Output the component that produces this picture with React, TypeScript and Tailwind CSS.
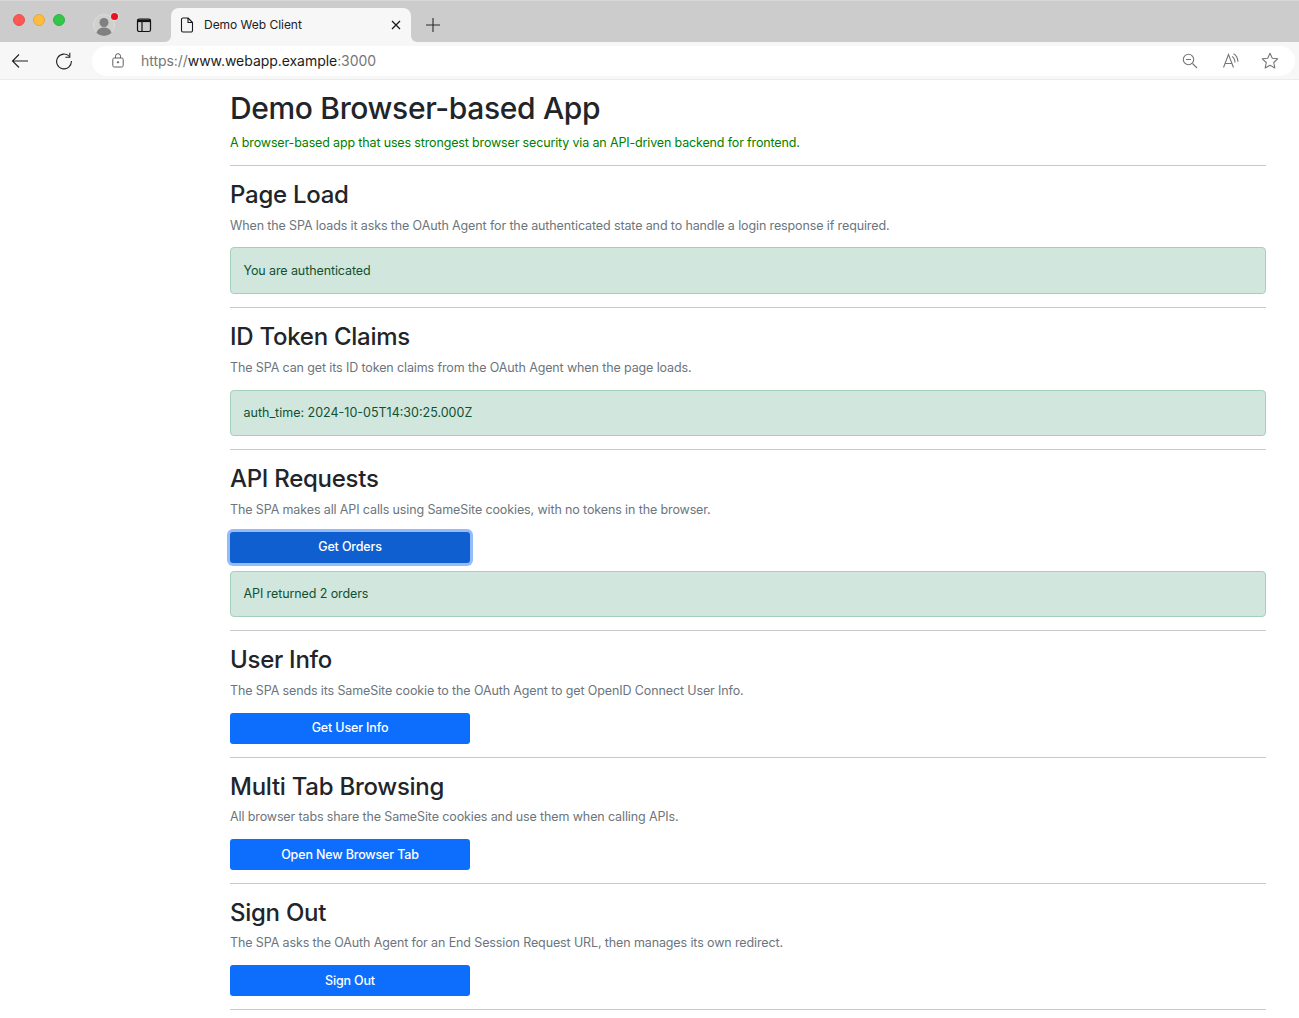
import { ReactNode } from "react";

function BrowserChrome() {
  return (
    <div className="h-[80px] w-full">
      {/* Tab strip */}
      <div className="relative flex h-[42px] items-start bg-[#cccccc] border-t border-[#d8d8d8]">
        <div className="ml-[13px] mt-[13px] flex gap-[8px]">
          <span className="h-[12px] w-[12px] rounded-full border border-[#e5534f] bg-[#fc5753]" />
          <span className="h-[12px] w-[12px] rounded-full border border-[#e5a93a] bg-[#fdbc40]" />
          <span className="h-[12px] w-[12px] rounded-full border border-[#2fb341] bg-[#33c748]" />
        </div>
        <div className="relative ml-[28px] mt-[13px] h-[22px] w-[22px]">
          <svg width="22" height="22" viewBox="0 0 22 22">
            <circle cx="11" cy="11" r="10.500" fill="#d0d0cd" stroke="#dcdcda" />
            <circle cx="11" cy="8.500" r="4.500" fill="#808080" />
            <path d="M3.500 19c1-4 4-5.500 7.500-5.500s6.500 1.500 7.500 5.500a11 11 0 0 1-15 0z" fill="#808080" />
          </svg>
          <span className="absolute right-[-3px] top-[-1px] h-[7px] w-[7px] rounded-full bg-[#e81123] ring-1 ring-[#dcdcda]" />
        </div>
        <svg className="ml-[21px] mt-[16px]" width="16" height="16" viewBox="0 0 16 16" fill="none" stroke="#111111" strokeWidth="1.200">
          <rect x="1.500" y="2" width="13" height="12.500" rx="1.800" />
          <path d="M1.500 3.800h13" strokeWidth="2.600" />
          <path d="M6 5v9" />
        </svg>
        <div className="relative ml-[19px] mt-[7px] flex h-[34px] w-[240px] items-center rounded-t-[8px] bg-[#f7f7f7] pb-[1px] pl-[9px] pr-[10px]">
          <svg className="absolute bottom-0 left-[-6px]" width="6" height="6" viewBox="0 0 6 6">
            <path d="M6 0v6H0a6 6 0 0 0 6-6z" fill="#f7f7f7" />
          </svg>
          <svg className="absolute bottom-0 right-[-6px]" width="6" height="6" viewBox="0 0 6 6">
            <path d="M0 0v6h6a6 6 0 0 1-6-6z" fill="#f7f7f7" />
          </svg>
          <svg width="14" height="16" viewBox="0 0 14 16" fill="none" stroke="#1a1a1a" strokeWidth="1.100" strokeLinejoin="round">
            <path d="M1.500 2.500a1.500 1.500 0 0 1 1.500-1.500h5l4.500 4.500v8a1.500 1.500 0 0 1-1.500 1.500h-8a1.500 1.500 0 0 1-1.500-1.500z" />
            <path d="M8 1v4.500h4.500" />
          </svg>
          <span className="ml-[10px] flex-1 text-[12px] tracking-[-0.03px] text-[#202124]">Demo Web Client</span>
          <svg width="10" height="10" viewBox="0 0 10 10" stroke="#1a1a1a" strokeWidth="1.300">
            <path d="M1 1l8 8M9 1l-8 8" />
          </svg>
        </div>
        <svg className="ml-[14px] mt-[16px]" width="16" height="16" viewBox="0 0 16 16" stroke="#2a2a2a" strokeWidth="1.100">
          <path d="M8 1v14M1 8h14" />
        </svg>
      </div>
      {/* Toolbar */}
      <div className="flex h-[38px] items-center border-b border-[#ececec] bg-[#f7f7f7] pl-[11px] pr-[4px]">
        <svg width="18" height="16" viewBox="0 0 18 16" fill="none" stroke="#1f1f1f" strokeWidth="1.100">
          <path d="M17 8H1.500M8 1.500L1.500 8l6.500 6.500" />
        </svg>
        <svg className="ml-[26px]" width="18" height="18" viewBox="0 0 18 18" fill="none" stroke="#1f1f1f" strokeWidth="1.100">
          <path d="M14.500 4.500A7.400 7.400 0 1 0 16.400 9" />
          <path d="M14.800 .8v4.400h-4.400" />
        </svg>
        <div className="ml-[19px] flex h-[30px] flex-1 items-center rounded-full bg-white pl-[20px] pr-[16px]">
          <svg width="12" height="15" viewBox="0 0 12 15" fill="none" stroke="#5f5f5f" strokeWidth="1">
            <rect x=".8" y="5" width="10.400" height="9" rx="1.500" />
            <path d="M3.500 5V3.200a2.500 2.500 0 0 1 5 0V5" />
            <circle cx="6" cy="9.300" r=".7" fill="#5f5f5f" />
          </svg>
          <span className="ml-[17px] flex-1 text-[14px] tracking-[-0.05px] text-[#767676]">
            https://<span className="text-[#1c1c1c]">www.webapp.example</span>:3000
          </span>
          <svg width="16" height="16" viewBox="0 0 16 16" fill="none" stroke="#767676" strokeWidth="1.100">
            <circle cx="6.500" cy="6.500" r="5.200" />
            <path d="M4 6.500h5M10.500 10.500l4.500 4.500" />
          </svg>
          <svg className="ml-[25px]" width="16" height="16" viewBox="0 0 16 16" fill="none" stroke="#767676" strokeWidth="1.100">
            <path d="M.5 14.500L5.500 1.500l5 13M2.300 10.500h6.400" />
            <path d="M9 3.500c1.500.8 2.800 2.500 3 6M10.500 .7c2 .9 4 3 4.500 8" />
          </svg>
          <svg className="ml-[22px]" width="18" height="17" viewBox="0 0 18 17" fill="none" stroke="#767676" strokeWidth="1.100" strokeLinejoin="round">
            <path d="M9 1.200l2.300 5 5.400.600-4 3.700 1.100 5.400L9 13.200l-4.800 2.700 1.100-5.400-4-3.700 5.400-.600z" />
          </svg>
        </div>
      </div>
    </div>
  );
}

function Alert({ children }: { children: ReactNode }) {
  return (
    <div className="flex h-[46.800px] items-center rounded-[4px] border border-[#a3cfbb] bg-[#d1e7dd] px-[12.500px] pt-[1px] text-[12.500px] tracking-[-0.1px] text-[#0f5132]">
      {children}
    </div>
  );
}

function Button({ children, focused }: { children: ReactNode; focused?: boolean }) {
  return (
    <button
      className={
        focused
          ? "block h-[31px] w-[240px] rounded-[3px] bg-[#0f5fd0] pt-[1px] text-[12.500px] font-medium tracking-[-0.15px] text-white shadow-[0_0_0_3px_#94bcfb]"
          : "block h-[31px] w-[240px] rounded-[3px] bg-[#0d6efd] pt-[1px] text-[12.500px] font-medium tracking-[-0.15px] text-white"
      }
    >
      {children}
    </button>
  );
}

function Section({ title, text, children, tight }: { title: string; text: string; children: ReactNode; tight?: boolean }) {
  return (
    <section className={tight ? "border-t border-[#c8c8c8] pb-[12.900px] pt-[13px]" : "border-t border-[#c8c8c8] pb-[13px] pt-[13px]"}>
      <h2 className="text-[24px] font-medium leading-[31px] tracking-[-0.27px] text-[#212529]">{title}</h2>
      <p className="mb-[11.900px] mt-[5.500px] text-[12.500px] leading-[20px] tracking-[-0.12px] text-[#6c757d]">{text}</p>
      {children}
    </section>
  );
}

export default function App() {
  return (
    <div className="h-[1018px] overflow-hidden bg-white font-['Inter',sans-serif]">
      <BrowserChrome />
      <main className="ml-[230px] w-[1036px]">
        <h1 className="mt-[9px] text-[30px] font-medium leading-[38px] tracking-[-0.35px] text-[#212529]">Demo Browser-based App</h1>
        <p className="mb-[12px] mt-[6px] text-[12.500px] leading-[20px] tracking-[-0.15px] text-[#008000]">
          A browser-based app that uses strongest browser security via an API-driven backend for frontend.
        </p>
        <Section
          title="Page Load"
          text="When the SPA loads it asks the OAuth Agent for the authenticated state and to handle a login response if required."
        >
          <Alert>You are authenticated</Alert>
        </Section>
        <Section title="ID Token Claims" text="The SPA can get its ID token claims from the OAuth Agent when the page loads.">
          <Alert>
            <span className="tracking-normal">auth_time: 2024-10-05T14:30:25.000Z</span>
          </Alert>
        </Section>
        <Section title="API Requests" text="The SPA makes all API calls using SameSite cookies, with no tokens in the browser.">
          <Button focused>Get Orders</Button>
          <div className="mt-[7.800px]">
            <Alert>API returned 2 orders</Alert>
          </div>
        </Section>
        <Section tight title="User Info" text="The SPA sends its SameSite cookie to the OAuth Agent to get OpenID Connect User Info.">
          <Button>Get User Info</Button>
        </Section>
        <Section tight title="Multi Tab Browsing" text="All browser tabs share the SameSite cookies and use them when calling APIs.">
          <Button>Open New Browser Tab</Button>
        </Section>
        <Section tight title="Sign Out" text="The SPA asks the OAuth Agent for an End Session Request URL, then manages its own redirect.">
          <Button>Sign Out</Button>
        </Section>
        <div className="border-t border-[#c8c8c8]" />
      </main>
    </div>
  );
}
